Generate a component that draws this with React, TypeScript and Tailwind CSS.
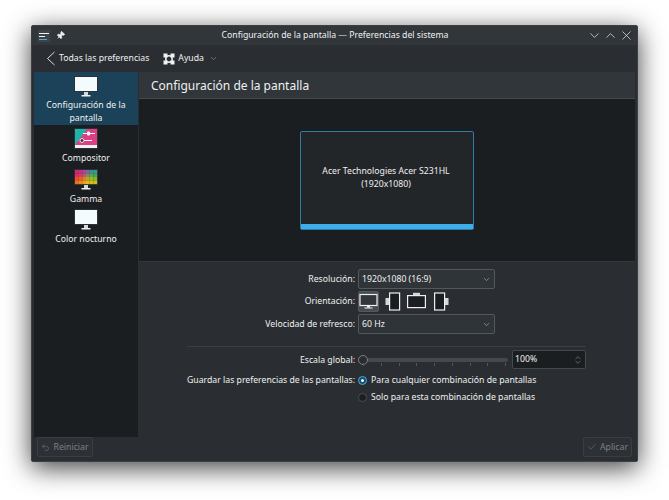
import React from "react";
import { ChevronDown, ChevronUp, X, Pin, Undo2, Check, ChevronsUpDown } from "lucide-react";

const gammaGrid = [
  ["#d8207c", "#c72f8e", "#a8479f", "#6b6fa8", "#3f8fa0", "#2f9f90"],
  ["#e02c5a", "#d93a64", "#b9586a", "#8a8a5a", "#5fa450", "#3fa860"],
  ["#ee4a2c", "#ea5a28", "#d8802a", "#b8a420", "#9cb81c", "#80b828"],
  ["#f5701c", "#f5861a", "#f0a018", "#e0b818", "#d0c018", "#c4c41c"],
];

const Monitor = ({ kind }: { kind: "display" | "compositor" | "gamma" | "night" }) => (
  <svg width="24" height="21" viewBox="0 0 24 21" className="block">
    {kind === "compositor" ? (
      <>
        <rect x="0" y="0" width="24" height="21" fill="#2d3136" />
        <rect x="1" y="1" width="22" height="19" fill="#1cb5a8" />
        <polygon points="13,1 23,1 23,19 1,19 1,17" fill="#dc3f86" />
        <rect x="1" y="17" width="22" height="3" fill="#eff0f1" />
        <rect x="9" y="5" width="12" height="1" fill="#fff" />
        <rect x="13" y="3.5" width="3" height="4" rx="1" fill="#fff" />
        <rect x="6" y="12" width="12" height="1" fill="#fff" />
        <circle cx="8" cy="12.5" r="2" fill="#3a3f44" stroke="#fff" strokeWidth="0.8" />
      </>
    ) : (
      <>
        <rect x="0" y="0" width="24" height="16" fill="#2d3136" />
        {kind === "gamma" ? (
          gammaGrid.map((row, r) =>
            row.map((c, i) => <rect key={`${r}-${i}`} x={1 + (i * 22) / 6} y={1 + (r * 14) / 4} width={22 / 6 + 0.1} height={3.6} fill={c} />)
          )
        ) : (
          <rect x="1" y="1" width="22" height="14" fill="#f4fbff" />
        )}
        <rect x="10" y="16" width="4" height="3" fill="#d5d8da" />
        <rect x="7.5" y="19" width="9" height="1.5" fill="#eff0f1" />
      </>
    )}
  </svg>
);

const SideItem = ({ kind, label, active }: { kind: "display" | "compositor" | "gamma" | "night"; label: React.ReactNode; active?: boolean }) => (
  <div className={`flex flex-col items-center text-center leading-[12.5px] ${active ? "h-[53px] bg-[#1b4258] pt-[4px]" : "h-[40.5px]"}`}>
    <Monitor kind={kind} />
    <div className={active ? "mt-[2px]" : "mt-[3px]"}>{label}</div>
  </div>
);

const Combo = ({ text }: { text: string }) => (
  <div className="flex h-[20px] w-[137px] items-center justify-between rounded-[2px] border border-[#53585d] bg-[#2f3438] pl-[3px] pr-[3px]">
    <span>{text}</span>
    <ChevronDown size={9} strokeWidth={1.3} className="text-[#d0d3d5]" />
  </div>
);

const Orient = ({ rot, active }: { rot: number; active?: boolean }) => (
  <div className={`flex h-[21px] w-[21px] items-center justify-center rounded-[2px] border ${active ? "border-[#54595e] bg-[#474c50]" : "border-transparent"}`}>
    <svg width="19" height="19" viewBox="0 0 19 19" className="block">
      {rot === 0 && (
        <>
          <rect x="1" y="2.5" width="17" height="11" fill="#33373b" stroke="#eff0f1" strokeWidth="1.2" />
          <rect x="8" y="14" width="3" height="1.5" fill="#eff0f1" />
          <rect x="5.5" y="15.5" width="8" height="1" fill="#eff0f1" />
        </>
      )}
      {rot === 1 && (
        <>
          <rect x="6.6" y="1" width="10" height="17" fill="#1b1e20" stroke="#eff0f1" strokeWidth="1.2" />
          <rect x="2.5" y="6" width="3.5" height="7" fill="#d5d8da" />
        </>
      )}
      {rot === 2 && (
        <>
          <rect x="0.6" y="3.6" width="17.8" height="12" fill="#1b1e20" stroke="#eff0f1" strokeWidth="1.2" />
          <rect x="6" y="0.8" width="7" height="2.4" fill="#d5d8da" />
        </>
      )}
      {rot === 3 && (
        <>
          <rect x="3.6" y="1" width="10" height="17" fill="#1b1e20" stroke="#eff0f1" strokeWidth="1.2" />
          <rect x="14" y="6" width="3.5" height="7" fill="#d5d8da" />
        </>
      )}
    </svg>
  </div>
);

const Slider = () => (
  <div className="relative flex h-[14px] w-[150px] items-center">
    <div className="h-[4px] w-full rounded-full bg-[#45494d]" />
    <div className="absolute left-0 top-[2px] h-[10px] w-[10px] rounded-full border border-[#7a7e81] bg-[#2a2e32]" />
    <div className="absolute bottom-[1px] left-[5px] right-[2px] flex justify-between">
      {Array.from({ length: 9 }).map((_, i) => (
        <span key={i} className="h-[3px] w-px bg-[#53585c]" />
      ))}
    </div>
  </div>
);

const Label = ({ children }: { children: React.ReactNode }) => (
  <div className="w-[168px] shrink-0 whitespace-nowrap text-right">{children}</div>
);

export default function App() {
  return (
    <div className="h-[500px] w-[669px] overflow-hidden bg-white pl-[31px] pt-[25px] text-[8.7px] leading-[13px] text-[#eff0f1] [font-family:'Noto_Sans',sans-serif]">
      <div className="flex h-[437px] w-[607px] flex-col rounded-[2px] border border-[#3c4045] bg-[#2a2e32] shadow-[0_6px_26px_rgba(0,0,0,0.75)]">
        {/* Title bar */}
        <div className="flex h-[19px] shrink-0 items-center bg-[#31363b] pl-[6px] pr-[3px]">
          <svg width="12" height="12" viewBox="0 0 12 12" className="shrink-0">
            <rect width="12" height="12" fill="#3e4348" />
            <rect x="1" y="3" width="10" height="1" fill="#eff0f1" />
            <rect x="1" y="6" width="6" height="1" fill="#eff0f1" />
            <rect x="1" y="9" width="8" height="1" fill="#3daee9" />
          </svg>
          <Pin size={9} strokeWidth={2} className="ml-[6px] rotate-45 fill-[#eff0f1] text-[#eff0f1]" />
          <div className="flex-1 pl-[18px] text-center">Configuración de la pantalla — Preferencias del sistema</div>
          <ChevronDown size={15} strokeWidth={1.1} />
          <ChevronUp size={15} strokeWidth={1.1} className="ml-px" />
          <X size={15} strokeWidth={1.1} className="ml-px" />
        </div>
        <div className="flex min-h-0 flex-1 flex-col pl-[2px] pr-[2px]">
          {/* Toolbar */}
          <div className="flex h-[27px] shrink-0 items-center bg-[#2a2e32] pl-[12px]">
            <svg width="10" height="15" viewBox="0 0 10 15" className="block">
              <polyline points="8.5,1 1.5,7.5 8.5,14" fill="none" stroke="#eff0f1" strokeWidth="0.9" />
            </svg>
            <span className="ml-[3px]">Todas las preferencias</span>
            <svg width="12" height="12" viewBox="0 0 12 12" className="ml-[14px]">
              <circle cx="6" cy="6" r="3.2" fill="none" stroke="#eff0f1" strokeWidth="1.5" />
              <rect x="0.5" y="0.5" width="4" height="4" fill="#eff0f1" />
              <rect x="7.5" y="0.5" width="4" height="4" fill="#eff0f1" />
              <rect x="0.5" y="7.5" width="4" height="4" fill="#eff0f1" />
              <rect x="7.5" y="7.5" width="4" height="4" fill="#eff0f1" />
            </svg>
            <span className="ml-[3px]">Ayuda</span>
            <ChevronDown size={9} strokeWidth={1.2} className="ml-[5px] text-[#bdc0c2]" />
          </div>
          <div className="flex min-h-0 flex-1">
            {/* Sidebar */}
            <div className="w-[104px] shrink-0 bg-[#1b1e20]">
              <SideItem kind="display" active label={<>Configuración de la<br />pantalla</>} />
              <div className="pt-[3px]">
                <SideItem kind="compositor" label="Compositor" />
                <SideItem kind="gamma" label="Gamma" />
                <SideItem kind="night" label="Color nocturno" />
              </div>
            </div>
            {/* Main */}
            <div className="flex min-w-0 flex-1 flex-col pl-px">
              <div className="flex h-[27px] shrink-0 items-center border-b border-[#44494d] bg-[#31363b] pl-[12px] text-[12px]">
                Configuración de la pantalla
              </div>
              <div className="flex h-[163px] shrink-0 items-start justify-start border-b border-[#33383c] bg-[#1b1e20] pl-[161px] pt-[32px]">
                <div className="flex h-[99px] w-[174px] shrink-0 flex-col rounded-[2px] border border-[#2d7ba6] bg-[#232629] text-center">
                  <div className="flex flex-1 flex-col justify-center pr-[2px]">
                    <div>Acer Technologies Acer S231HL</div>
                    <div>(1920x1080)</div>
                  </div>
                  <div className="h-[5px] bg-[#3daee9]" />
                </div>
              </div>
              <div className="flex min-h-0 flex-1 flex-col pl-[48px] pr-[49px] pt-[7px]">
                <div className="flex items-center gap-[3px]">
                  <Label>Resolución:</Label>
                  <Combo text="1920x1080 (16:9)" />
                </div>
                <div className="mt-[2px] flex items-center gap-[3px]">
                  <Label>Orientación:</Label>
                  <div className="flex gap-[3px]">
                    <Orient rot={0} active />
                    <Orient rot={1} />
                    <Orient rot={2} />
                    <Orient rot={3} />
                  </div>
                </div>
                <div className="mt-[2px] flex items-center gap-[3px]">
                  <Label>Velocidad de refresco:</Label>
                  <Combo text="60 Hz" />
                </div>
                <div className="mt-[12px] h-px bg-[#3a3f43]" />
                <div className="mt-[3px] flex items-center gap-[3px]">
                  <div className="w-[168px] shrink-0 whitespace-nowrap pt-px text-right">Escala global:</div>
                  <Slider />
                  <div className="ml-px flex h-[19px] w-[74px] items-center justify-between rounded-[2px] border border-[#44494d] bg-[#1b1e20] pl-[2px] pr-[2px]">
                    <span>100%</span>
                    <ChevronsUpDown size={10} strokeWidth={1.2} className="text-[#a9acae]" />
                  </div>
                </div>
                <div className="mt-[3px] flex h-[17px] items-center gap-[3px]">
                  <Label>Guardar las preferencias de las pantallas:</Label>
                  <span className="flex h-[9px] w-[9px] shrink-0 items-center justify-center rounded-full border border-[#3daee9] bg-[#1b4b66]">
                    <span className="h-[3px] w-[3px] rounded-full bg-white" />
                  </span>
                  <span className="ml-px whitespace-nowrap">Para cualquier combinación de pantallas</span>
                </div>
                <div className="flex h-[17px] items-center gap-[3px]">
                  <div className="w-[168px] shrink-0" />
                  <span className="h-[9px] w-[9px] shrink-0 rounded-full border border-[#4a4e52] bg-[#1b1e20]" />
                  <span className="ml-px whitespace-nowrap">Solo para esta combinación de pantallas</span>
                </div>
              </div>
            </div>
          </div>
          {/* Footer */}
          <div className="flex h-[24px] shrink-0 items-start justify-between pl-[3px] pr-[3px] text-[#7c8083]">
            <div className="flex h-[20px] w-[56px] items-center justify-center gap-[3px] rounded-[2px] border border-[#3a3e42] bg-[#2d3135]">
              <Undo2 size={9} strokeWidth={1.3} />
              <span>Reiniciar</span>
            </div>
            <div className="flex h-[20px] w-[49px] items-center justify-center gap-[3px] rounded-[2px] border border-[#3a3e42] bg-[#2d3135]">
              <Check size={10} strokeWidth={1.3} />
              <span>Aplicar</span>
            </div>
          </div>
        </div>
      </div>
    </div>
  );
}
